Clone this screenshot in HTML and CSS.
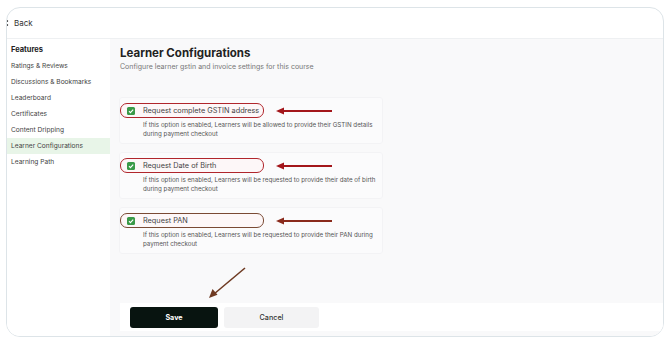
FILE: index.html
```html
<!DOCTYPE html>
<html>
<head>
<meta charset="utf-8">
<link rel="stylesheet" href="styles.css">
</head>
<body>
<div class="card">
  <header class="topbar">
    <svg class="chev" width="6" height="8" viewBox="0 0 6 8"><path d="M1.5 1.5v1M1.5 5.5v1" stroke="#555" stroke-width="1.2" stroke-linecap="round"/></svg>
    <span class="back">Back</span>
  </header>
  <div class="body">
    <nav class="sidebar">
      <div class="side-title">Features</div>
      <div class="side-item">Ratings &amp; Reviews</div>
      <div class="side-item">Discussions &amp; Bookmarks</div>
      <div class="side-item">Leaderboard</div>
      <div class="side-item">Certificates</div>
      <div class="side-item">Content Dripping</div>
      <div class="side-item active">Learner Configurations</div>
      <div class="side-item">Learning Path</div>
    </nav>
    <main class="main">
      <div class="content">
        <h1 class="title">Learner Configurations</h1>
        <p class="subtitle">Configure learner gstin and invoice settings for this course</p>
        <div class="options">
          <div class="option">
            <div class="opt-row red">
              <span class="check"><svg width="8" height="8" viewBox="0 0 8 8"><path d="M2 4.2l1.4 1.4L6.2 2.6" fill="none" stroke="#fff" stroke-width="1.1"/></svg></span>
              <span class="opt-label">Request complete GSTIN address</span>
            </div>
            <p class="opt-desc">If this option is enabled, Learners will be allowed to provide their GSTIN details during payment checkout</p>
            <svg class="arrow" width="58" height="10" viewBox="0 0 58 10"><path d="M57 5H6" stroke="#a3161b" stroke-width="1.8"/><path d="M1 5l8-3.6v7.2z" fill="#a3161b"/></svg>
          </div>
          <div class="option">
            <div class="opt-row red">
              <span class="check"><svg width="8" height="8" viewBox="0 0 8 8"><path d="M2 4.2l1.4 1.4L6.2 2.6" fill="none" stroke="#fff" stroke-width="1.1"/></svg></span>
              <span class="opt-label">Request Date of Birth</span>
            </div>
            <p class="opt-desc">If this option is enabled, Learners will be requested to provide their date of birth during payment checkout</p>
            <svg class="arrow" width="58" height="10" viewBox="0 0 58 10"><path d="M57 5H6" stroke="#a3161b" stroke-width="1.8"/><path d="M1 5l8-3.6v7.2z" fill="#a3161b"/></svg>
          </div>
          <div class="option">
            <div class="opt-row brown">
              <span class="check"><svg width="8" height="8" viewBox="0 0 8 8"><path d="M2 4.2l1.4 1.4L6.2 2.6" fill="none" stroke="#fff" stroke-width="1.1"/></svg></span>
              <span class="opt-label">Request PAN</span>
            </div>
            <p class="opt-desc">If this option is enabled, Learners will be requested to provide their PAN during payment checkout</p>
            <svg class="arrow" width="58" height="10" viewBox="0 0 58 10"><path d="M57 5H6" stroke="#8a2a1c" stroke-width="1.8"/><path d="M1 5l8-3.6v7.2z" fill="#8a2a1c"/></svg>
          </div>
        </div>
        <svg class="diag" width="40" height="34" viewBox="0 0 40 34"><path d="M38 2L7 28" stroke="#6e3a22" stroke-width="1.6"/><path d="M2 32l3.5-9 5 5.8z" fill="#6e3a22"/></svg>
      </div>
      <footer class="footer">
        <button class="btn save">Save</button>
        <button class="btn cancel">Cancel</button>
      </footer>
    </main>
  </div>
</div>
</body>
</html>
```

FILE: styles.css
```css
* { box-sizing: border-box; }
html, body { margin: 0; padding: 0; background: #fff; }
body {
  font-family: Inter, "Noto Sans", sans-serif;
  padding: 7px 6px 5px 6px;
  color: #333;
}
.card {
  width: 658px;
  height: 330px;
  border: 1px solid #dde4e8;
  border-radius: 14px;
  overflow: hidden;
  display: flex;
  flex-direction: column;
  background: #fff;
}
.topbar {
  height: 31px;
  flex: none;
  display: flex;
  align-items: center;
  gap: 2px;
  padding-left: 0;
  border-bottom: 1px solid #eef0f2;
}
.chev { margin-left: -1px; }
.back { font-size: 8px; color: #333; }
.body { flex: 1; display: flex; min-height: 0; }
.sidebar {
  width: 103px;
  flex: none;
  padding-top: 3px;
  background: #fff;
}
.side-title {
  font-size: 7.5px;
  font-weight: 700;
  color: #222;
  padding-left: 4px;
  height: 16px;
  line-height: 16px;
}
.side-item {
  font-size: 6.6px;
  color: #444;
  padding-left: 4px;
  height: 16px;
  line-height: 16px;
}
.side-item.active { background: #e8f5e8; }
.main {
  flex: 1;
  background: #f9f9fa;
  display: flex;
  flex-direction: column;
  padding-left: 10px;
}
.content { flex: 1; position: relative; padding-top: 6px; }
.title {
  margin: 0;
  font-size: 11.5px;
  font-weight: 700;
  color: #222;
  line-height: 16px;
}
.subtitle {
  margin: 0;
  font-size: 7px;
  color: #777;
  line-height: 12px;
}
.options {
  margin-top: 24px;
  display: flex;
  flex-direction: column;
  gap: 8px;
  margin-left: -1px;
}
.option {
  position: relative;
  width: 264px;
  height: 47px;
  background: #fbfbfc;
  border: 1px solid #f3f3f5;
  border-radius: 3px;
  padding: 5px 0 0 0;
}
.opt-row {
  width: 144px;
  height: 15px;
  border-radius: 7px;
  display: flex;
  align-items: center;
  padding-left: 6px;
  gap: 8px;
  background: #fdf7f8;
  white-space: nowrap;
}
.opt-row.red { border: 1.4px solid #b0262c; }
.opt-row.brown { border: 1.4px solid #7a4a34; }
.check {
  width: 8px;
  height: 8px;
  border-radius: 1.5px;
  background: #3a9a48;
  display: flex;
  flex: none;
}
.opt-label { font-size: 7.3px; color: #444; }
.opt-desc {
  margin: 2px 0 0 23px;
  font-size: 6.2px;
  line-height: 9px;
  color: #555;
  width: 238px;
}
.arrow { position: absolute; left: 155px; top: 8px; }
.diag { position: absolute; left: 87px; top: 227px; }
.footer {
  flex: none;
  height: 28px;
  background: #fff;
  display: flex;
  align-items: center;
  gap: 6px;
  padding-left: 10px;
  margin-bottom: 5px;
}
.btn {
  height: 21px;
  border: none;
  border-radius: 3px;
  font-family: Inter, "Noto Sans", sans-serif;
  font-size: 7.2px;
}
.save { width: 88px; background: #081410; color: #fff; font-weight: 700; }
.cancel { width: 95px; background: #f3f3f4; color: #333; font-weight: 500; }
```
